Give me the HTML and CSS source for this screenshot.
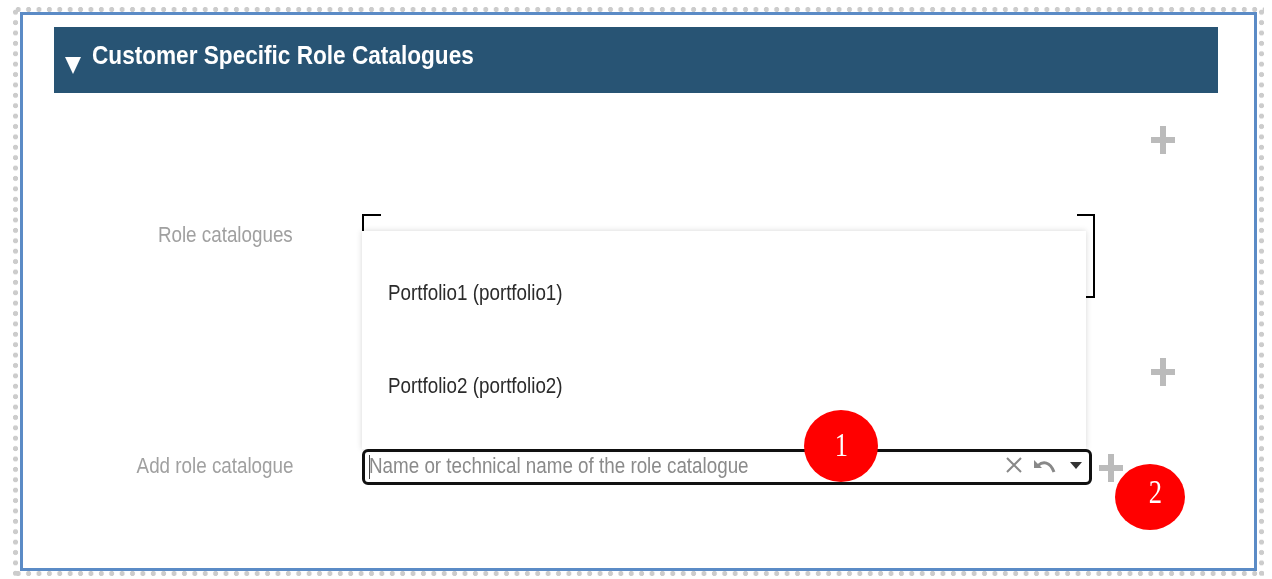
FILE: index.html
```html
<!DOCTYPE html>
<html lang="en">
<head>
<meta charset="utf-8">
<title>Customer Specific Role Catalogues</title>
<link rel="stylesheet" href="styles.css">
</head>
<body>
<div class="dotted">
  <main class="frame">
    <header class="banner">
      <span class="tri"></span>
      <h1 class="title"><span class="squeeze wide">Customer Specific Role Catalogues</span></h1>
    </header>
    <div class="add-row first">
      <svg class="plus" viewBox="0 0 26 30"><path d="M10 1h6v11h9v6h-9v11h-6V18H1v-6h9z"/></svg>
    </div>
    <div class="row list-row">
      <label class="lab"><span class="squeeze-r">Role catalogues</span></label>
      <div class="listbox">
        <span class="corner-l"></span>
        <span class="corner-r"></span>
      </div>
    </div>
    <div class="add-row second">
      <svg class="plus" viewBox="0 0 26 30"><path d="M10 1h6v11h9v6h-9v11h-6V18H1v-6h9z"/></svg>
    </div>
    <div class="row input-row">
      <label class="lab"><span class="squeeze-r">Add role catalogue</span></label>
      <div class="inputbox">
        <span class="caret"></span>
        <span class="ph"><span class="squeeze">Name or technical name of the role catalogue</span></span>
        <svg class="ic-x" viewBox="0 0 16 16"><path d="M1 1l14 14M15 1L1 15"/></svg>
        <svg class="ic-undo" viewBox="0 0 22 14"><path class="fill" d="M0 1v8h8L5 6z"/><path class="stroke" d="M4 6.500C9 2 16 2.500 20 13"/></svg>
        <svg class="ic-down" viewBox="0 0 12 7"><path d="M0 0h12L6 7z"/></svg>
      </div>
      <svg class="plus inline" viewBox="0 0 26 30"><path d="M10 1h6v11h9v6h-9v11h-6V18H1v-6h9z"/></svg>
    </div>
    <div class="dropdown">
      <div class="opt"><span class="squeeze">Portfolio1 (portfolio1)</span></div>
      <div class="opt"><span class="squeeze">Portfolio2 (portfolio2)</span></div>
    </div>
    <div class="badge b1"><span class="digit">1</span></div>
    <div class="badge b2"><span class="digit">2</span></div>
  </main>
</div>
</body>
</html>
```
FILE: styles.css
```css
* { box-sizing: border-box; }
html, body { margin: 0; padding: 0; height: 579px; overflow: hidden; background: #fff; }
body { font-family: "Liberation Sans", Arial, sans-serif; }
.dotted {
  margin: 7px 8px 3px 13px;
  width: 1251px;
  height: 569px;
  padding: 5px 7px;
  background-image:
    radial-gradient(circle at center, #ccc 2.2px, transparent 2.900px),
    radial-gradient(circle at center, #ccc 2.2px, transparent 2.900px),
    radial-gradient(circle at center, #ccc 2.2px, transparent 2.900px),
    radial-gradient(circle at center, #ccc 2.2px, transparent 2.900px);
  background-size: 10.4px 5px, 10.4px 5px, 5px 10.4px, 5px 10.4px;
  background-position: left top, left bottom, left top, right top;
  background-repeat: repeat-x, repeat-x, repeat-y, repeat-y;
}
.frame {
  position: relative;
  height: 559px;
  border: 3px solid #5b8bc6;
  padding: 12px 36px 0 31px;
  background: #fff;
}
.squeeze, .squeeze-r { display: inline-block; white-space: nowrap; transform: scaleX(.855); }
.squeeze { transform-origin: left center; }
.squeeze-r { transform-origin: right center; }
.squeeze.wide { transform: scaleX(.904); }
.banner {
  height: 66px;
  background: #285474;
  display: flex;
  align-items: center;
  padding-left: 11px;
  color: #fff;
}
.tri {
  width: 0; height: 0;
  border-left: 8px solid transparent;
  border-right: 8px solid transparent;
  border-top: 17px solid #fff;
  margin-top: 11px;
  margin-right: 11px;
  filter: blur(.4px);
}
.title { margin: 0 0 10px; font-size: 25px; font-weight: 700; line-height: 30px; }
.add-row { display: flex; justify-content: flex-end; padding-right: 42px; }
.first { height: 121px; padding-top: 32px; }
.second { height: 148px; padding-top: 59px; }
.plus { width: 26px; height: 30px; fill: #bbb; filter: blur(.6px); flex: none; }
.row { display: flex; }
.list-row { height: 84px; }
.lab {
  width: 239px;
  margin-right: 69px;
  text-align: right;
  color: #a0a0a0;
  font-size: 22px;
  flex: none;
}
.list-row .lab { padding-top: 8px; }
.input-row .lab { line-height: 34px; }
.listbox { width: 733px; display: flex; justify-content: space-between; }
.corner-l { width: 19px; height: 84px; border: solid #000; border-width: 2px 0 0 2px; }
.corner-r { width: 18px; height: 84px; border: solid #000; border-width: 2px 2px 2px 0; }
.input-row { align-items: flex-start; margin-top: 3px; }
.inputbox {
  position: relative;
  width: 730px;
  height: 36px;
  border: 3px solid #111;
  border-radius: 6px;
  display: flex;
  align-items: center;
  padding-left: 4px;
  background: #fff;
  overflow: hidden;
}
.caret { width: 1px; height: 24px; background: #444; flex: none; margin-right: -1px; }
.ph { color: #8a8a8a; font-size: 22px; flex: 1; min-width: 0; line-height: 26px; margin-bottom: 2px; white-space: nowrap; }
.ic-x { width: 16px; height: 16px; fill: none; stroke: #888; stroke-width: 2; flex: none; margin: -4px 12px 0 0; }
.ic-undo { width: 22px; height: 14px; flex: none; margin: -3px 14px 0 0; }
.ic-undo .fill { fill: #888; }
.ic-undo .stroke { fill: none; stroke: #888; stroke-width: 3; }
.ic-down { width: 12px; height: 7px; fill: #333; flex: none; margin: -3px 7px 0 0; }
.inline { margin: 4px 0 0 6px; }
.dropdown {
  position: absolute;
  left: 339px;
  top: 216px;
  width: 724px;
  height: 218px;
  background: #fff;
  box-shadow: 0 0 6px rgba(0,0,0,.16);
  padding-top: 15px;
}
.opt { height: 93px; padding-left: 26px; display: flex; align-items: center; font-size: 22px; color: #2b2b2b; }
.badge {
  position: absolute;
  background: #f00;
  color: #fff;
  border-radius: 50%;
  font-family: "Liberation Serif", serif;
  font-size: 34px;
  line-height: 1;
  display: flex;
  align-items: center;
  justify-content: center;
}
.digit { display: inline-block; transform: scaleX(.78); }
.b1 { left: 781px; top: 395px; width: 74px; height: 72px; padding-bottom: 2px; }
.b2 { left: 1092px; top: 449px; width: 70px; height: 66px; padding: 0 0 10px 10px; }
```
